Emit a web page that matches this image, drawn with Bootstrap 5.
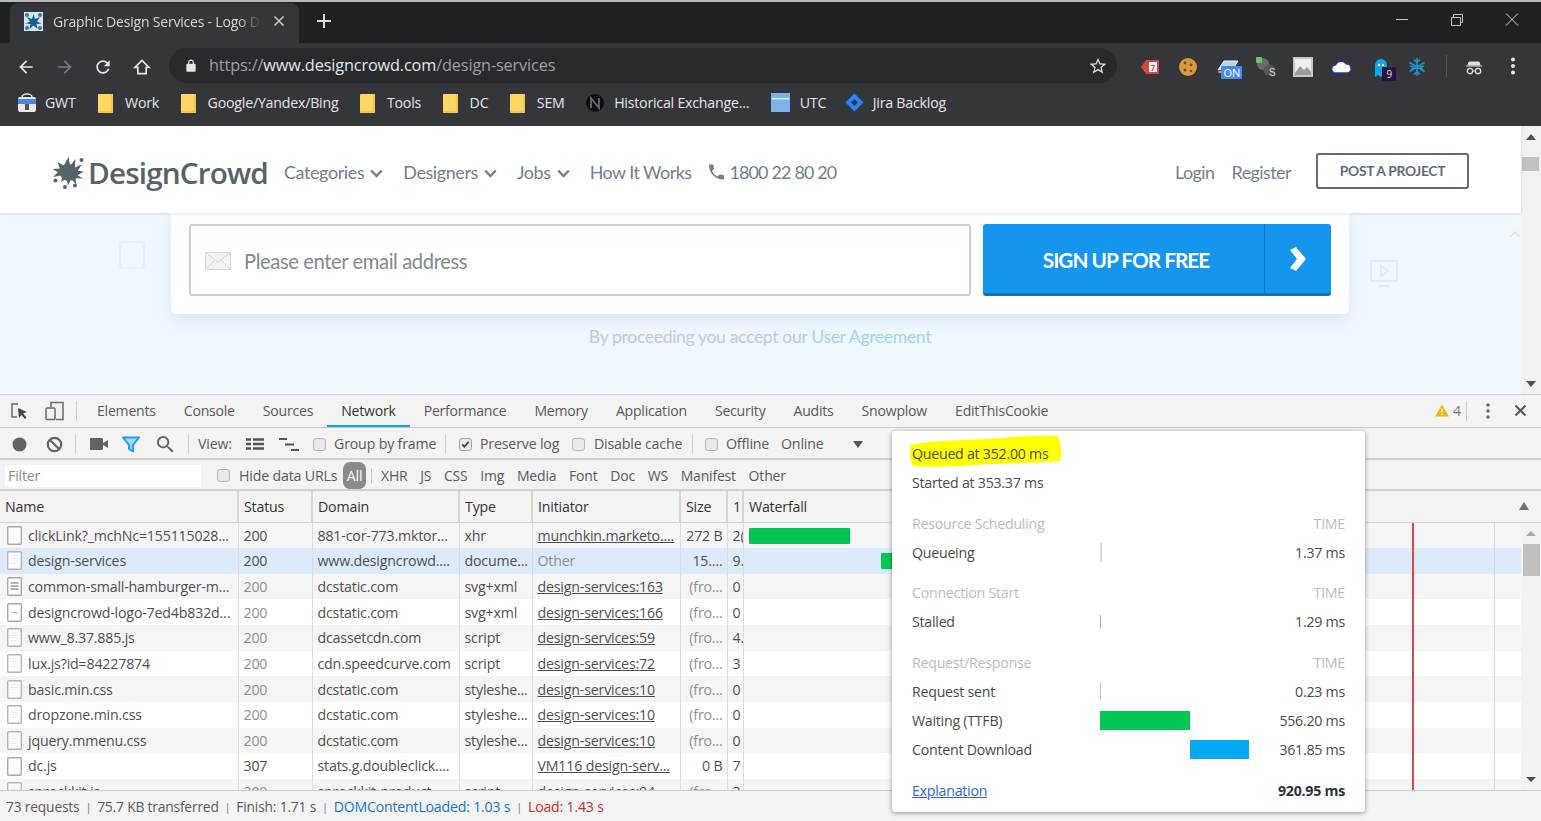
<!DOCTYPE html>
<html lang="en">
<head>
<meta charset="utf-8">
<title>Graphic Design Services - DevTools</title>
<link rel="stylesheet" href="https://cdn.jsdelivr.net/npm/bootstrap@5.3.0/dist/css/bootstrap.min.css">
<style>
html,body{height:821px;overflow:hidden;background:#fff}
body{font-family:"Open Sans","Liberation Sans",sans-serif}
.shell{width:1541px;height:821px;position:relative;overflow:hidden}
.svg-defs{position:absolute;width:0;height:0}
.fx0{flex:none}
/* chrome */
.topline{height:2px;background:#b9b9b9}
.tabstrip{height:41px;background:#202124}
.chrome-tab{width:289px;height:40px;margin:1px 0 0 10px;background:#35363a;border-radius:8px 8px 0 0;color:#d5d6d8;font-size:14px;letter-spacing:-.2px;padding:0 14px 4px 14px}
.fav{margin-right:10px;flex:none}
.tab-title{width:209px;overflow:hidden;white-space:nowrap;-webkit-mask-image:linear-gradient(90deg,#000 88%,transparent);mask-image:linear-gradient(90deg,#000 88%,transparent)}
.new-tab{margin:11px 0 0 17px}
.win-group{margin-right:1.5px}
.win-btn{width:55px}
.toolbar-dark{height:83px;background:#35363a;color:#e4e5e7}
.addr-row{height:45px;padding:0 0 0 16px}
.tool-btn{width:20px;margin-right:19px;flex:none}
.tool-btn.tight{margin-right:18px}
.addr{width:948px;height:35px;margin-left:-2px;background:#292a2d;border-radius:18px;padding:0 9px 0 15px;font-size:16.3px;letter-spacing:-.15px}
.addr .dim{color:#9aa0a6}
.addr-text{margin-left:3px}
.ext-set{margin-left:23px}
.ext-box{width:38.2px;flex:none;position:relative}
.ext-box.w-cloud{width:43.5px}
.ext-box.w-ghost{width:34px}
.ext-box.w-snow{width:18px}
.ext-sep{width:1px;height:22px;background:#55575b;margin:0 18px 0 20px}
.incog{width:46px}
.badge-on{position:absolute;left:5px;top:12px;background:#4688f1;color:#fff;font-size:11px;line-height:13px;padding:0 2px;border-radius:1px;letter-spacing:0}
.badge-nine{position:absolute;left:8px;top:14px;background:#2c0f3c;color:#ddd;font-size:10px;line-height:14px;width:14px;text-align:center;border-radius:1px}
.bm-row{height:38px;padding:0 0 8px 17px;font-size:14.2px;letter-spacing:-.22px;white-space:nowrap;gap:21.5px}
.bm-row>div{gap:12px}
.bm-row>div.g8{gap:8px;margin-right:1px}
.bm-row>div.g10{gap:10px}
.bm-row>div.bm-last{gap:9px;margin-left:-3px}
.folder{width:15px;height:19px;background:#fdd663;border-radius:1px;flex:none;margin-top:1px;box-shadow:inset -2px -2px 0 #f2c64d}
/* page */
.page-pane{height:268px;position:relative}
.page-main{width:1521px}
.site-nav{height:87px;background:#fff;padding:6px 52px 0;position:relative;z-index:2;box-shadow:0 1px 3px rgba(60,80,100,.16);font-family:Lato,sans-serif;font-size:17.9px;color:#708090}
.brand-word{font-family:"Open Sans",sans-serif;font-weight:600;font-size:29.7px;letter-spacing:-.85px;color:#566367;margin-left:3px;line-height:1}
.site-links{margin-left:16px}
.chev{margin:2px 0 0 6px}
.site-link{margin-right:20px;white-space:nowrap;letter-spacing:-.02em}
.site-link.how{margin-right:18px;letter-spacing:-.03em}
.phone-num{gap:5px;letter-spacing:-.045em}
.login-link{margin-right:17px;letter-spacing:-.03em}
.register-link{margin-right:25px;letter-spacing:-.03em}
.post-btn{width:153px;height:36px;border:2px solid #5d6b7b;border-radius:3px;font-size:13.8px;font-weight:700;color:#5d6b7b;letter-spacing:-.3px;background:#fff;margin-top:-3px}
.hero-pane{height:180px;background:#eef7fe;position:relative;font-family:Lato,sans-serif;padding-right:1px}
.form-card{width:1178px;height:101px;background:#fff;border-radius:0 0 5px 5px;box-shadow:0 6px 16px rgba(90,120,150,.13);padding:11px 18px 18px}
.email-box{width:782px;height:72px;border:2px solid #c8d0df;border-radius:3px;padding:2px 0 0 14px;color:#7f8a94;font-size:20.2px;letter-spacing:-.02em;background:#fff}
.env{margin-right:13px;flex:none}
.signup{width:348px;height:72px;margin-left:12px;background:#1496ec;border-bottom:3px solid #0c74bc;border-radius:3px;color:#fff;font-weight:700;font-size:20.8px;letter-spacing:-1px}
.signup-label{width:281px;padding:2px 0 0 5px}
.signup-arrow{width:67px;height:100%;border-left:1px solid #0f78c0}
.agree{margin-top:12px;color:#c3ccd4;font-size:17.6px;letter-spacing:-.02em;line-height:22px;text-align:center}
.agree span{color:#a1d4f5}
.ghost-icon{position:absolute}
.ghost-a{left:119px;top:28px}
.ghost-b{left:1370px;top:47px}
.ghost-c{left:1509px;top:17px}
.page-scroll{width:20px;background:#f1f1f1;position:relative}
.sb-thumb{position:absolute;left:1px;top:31px;width:17px;height:14px;background:#c1c1c1}
.sb-up,.sb-down{position:absolute;left:5px;width:0;height:0;border-left:5px solid transparent;border-right:5px solid transparent}
.sb-up{top:8px;border-bottom:6px solid #505050}
.sb-down{bottom:7px;border-top:6px solid #505050}
/* devtools */
.devtools{height:427px;background:#f3f3f3;color:#5a5a5a;font-size:14.2px;letter-spacing:-.18px;border-top:1px solid #ccc;white-space:nowrap}
.dt-tabs{height:33px;border-bottom:1px solid #ccc;padding-left:10px}
.dt-tab{padding:0 14px;height:32px;line-height:32px;color:#5a5a5a;font-size:14.05px;letter-spacing:-.21px}
.dt-tab.on{color:#333;box-shadow:inset 0 -2px 0 #03a9f4}
.dt-vsep{width:1px;height:20px;background:#ccc;flex:none}
.vs-tabs{margin:0 6px 0 12px}
.vs-warn{margin:0 19px 0 5px}
.vs-a{margin:0 14px 0 12px}
.vs-b{margin:0 9px 0 14px}
.vs-c{margin:0 13px 0 11px}
.vs-d{margin:0 12px}
.vs-e{margin:0 9px 0 5px;height:16px}
.warn-count{margin-left:4px;color:#777}
.dots-dt{margin-right:24px}
.close-dt{margin-right:14px}
.dt-bar{height:32px;border-bottom:2px solid #d2d2d2;position:relative;padding-top:2px}
.bar-main{padding-left:12px}
.dt-bar .form-check-input{width:13px;height:13px;margin:0;border:1px solid #b5b5b5;border-radius:3px;background-color:#e9e9e9;flex:none}
.dt-bar .form-check-input:checked{background-color:#e9e9e9;border-color:#a5a5a5;background-image:url("data:image/svg+xml,%3csvg xmlns='http://www.w3.org/2000/svg' viewBox='0 0 20 20'%3e%3cpath fill='none' stroke='%23444' stroke-width='3.4' d='m4 10 4 4 8-9'/%3e%3c/svg%3e")}
.dt-bar .ml-19{margin-left:19px}.dt-bar .ml-14{margin-left:14px}.dt-bar .ml-17{margin-left:17px}.dt-bar .ml-15{margin-left:15px}.dt-bar .ml-16{margin-left:16px}.dt-bar .ml-31{margin-left:31px}
.tx-view{width:48px}
.tx-group{margin-left:8px;width:100px}
.tx-pres{margin-left:8px;width:78px}
.tx-dis{margin-left:9px;width:86px}
.tx-off{margin-left:8px;width:43px}
.tx-on{margin-left:12px;width:41px}
.tx-hide{margin-left:9px;width:96px}
.filter-bar{height:31px}
.filter-input{width:196px;height:22px;background:#fff;color:#8b8b8b;padding-left:3px;line-height:22px;margin-left:5px}
.pill-all{width:23px;height:27px;margin-left:8px;background:#8a8a8a;color:#fff;border-radius:7px;line-height:27px;text-align:center}
.type-f{gap:12.7px;font-size:14px}
.net-grid{table-layout:fixed;border-collapse:collapse}
.net-grid td,.net-grid th{padding:0 0 0 5px;overflow:hidden;white-space:nowrap;font-weight:400;border-right:1px solid #dcdcdc}
.net-grid td:last-child,.net-grid th:last-child{border-right:0;overflow:visible}
.cw1{width:238px}.cw2{width:74px}.cw3{width:147px}.cw4{width:73px}.cw5{width:148px}.cw6{width:47px}.cw7{width:16px}
.head-grid{border-bottom:1px solid #d2d2d2;width:1541px}
.head-grid th{height:31px;border-right:2px solid #d6d6d6;color:#333}
.head-grid th:last-child{position:relative}
.sort-up{position:absolute;right:12px;top:11px;width:0;height:0;border-left:5px solid transparent;border-right:5px solid transparent;border-bottom:8px solid #6e6e6e}
.body-wrap{height:267px;overflow:hidden;position:relative;display:flex}
.body-grid{width:1521px;flex:none}
.body-grid tr{height:25.65px;background:#fff;color:#4f4f4f}
.body-grid tr:nth-child(odd){background:#f5f5f5}
.body-grid tr.picked{background:#dcebfc}
.body-grid td.dimc{color:#8e8e8e}
.body-grid a{color:#4f4f4f;text-decoration:underline}
.name-cell{display:flex;align-items:center;gap:6px;height:25.6px;margin-left:2px}
.bar-green{height:16px;background:#03c653;border-radius:1px;margin-top:1px}
.mark-red,.mark-gray{position:absolute;top:0;bottom:0;width:1px}
.mark-red{left:1412px;background:#d64a4a;width:2px}
.mark-gray{left:1494px;background:#d8d8d8}
.grid-scroll{width:20px;background:#f2f2f2;position:relative;flex:none}
.gs-thumb{position:absolute;left:2px;top:21px;width:17px;height:32px;background:#bfbfbf}
.gs-up,.gs-down{position:absolute;left:5px;width:0;height:0;border-left:5px solid transparent;border-right:5px solid transparent}
.gs-up{top:8px;border-bottom:5px solid #a9a9a9}
.gs-down{bottom:8px;border-top:5px solid #505050}
.status-line{height:30px;border-top:1px solid #ccc;padding:4px 0 0 6px;font-size:13.8px;color:#5a5a5a;gap:5.9px;background:#f3f3f3}
.status-line i{font-style:normal;font-size:11px;color:#777}
.c-blue{color:#1a73c8;font-size:14.1px}
.c-red{color:#c62f2f;font-size:14.1px}
/* timing popup */
.timing{position:absolute;left:892px;top:431px;width:473px;height:381px;background:#fff;border-radius:3px;box-shadow:0 1px 5px rgba(0,0,0,.4);padding:8px 20px 0;font-size:14.2px;letter-spacing:-.25px;color:#4a4a4a;z-index:5}
.t-row{height:29px;display:flex;align-items:center;position:relative}
.t-head{color:#bcbcbc;margin-top:12px}
.t-head.t-second{margin-top:11px}
.t-label{width:188px;flex:none}
.t-track{width:150px;height:19px;flex:none;position:relative}
.t-val{flex:1;text-align:right}
.t-fill{position:absolute;top:0;bottom:0}
.tick{position:absolute;top:0;bottom:0;left:0;width:2px;background:#d8d8d8}
.tick.t-stall{width:1px;background:#aaa;top:3px;bottom:3px}
.tick.t-sent{width:1px;background:#c4c4c4}
.fill-wait{left:0;width:90px;background:#03c653}
.fill-dl{left:90px;width:59px;background:#03a9f4}
.highlight{position:absolute;left:-4px;top:-6px;z-index:-1}
.t-foot{margin-top:12px}
.t-foot a{color:#3367c7}
.t-foot b{font-weight:700;color:#333}
</style>
</head>
<body>
<svg class="svg-defs" width="0" height="0">
<defs>
<symbol id="doc" viewBox="0 0 15 19"><rect x=".7" y=".7" width="13.6" height="17.6" rx="1" fill="#fff" stroke="#b4b4b4" stroke-width="1.4"/><path d="M3.5 5h8M3.5 7.5h8M3.5 10h8M3.5 12.5h6" stroke="#ececec"/></symbol>
<symbol id="blank" viewBox="0 0 15 19"><rect x=".7" y=".7" width="13.6" height="17.6" rx="1" fill="#fff" stroke="#a8a8a8" stroke-width="1.4"/></symbol>
<symbol id="lined" viewBox="0 0 15 19"><rect x=".7" y=".7" width="13.6" height="17.6" rx="1" fill="#fff" stroke="#a8a8a8" stroke-width="1.4"/><path d="M3.5 6h8M3.5 9h8M3.5 12h8" stroke="#5a6f88" stroke-width="1.2"/></symbol>
<symbol id="dash" viewBox="0 0 15 19"><rect x=".7" y=".7" width="13.6" height="17.6" rx="1" fill="#fff" stroke="#a8a8a8" stroke-width="1.4"/><path d="M4 9.500h7" stroke="#bbb"/></symbol>
<symbol id="chevdown" viewBox="0 0 13 9"><path d="M1.200 1.500 6.500 7l5.300-5.500" fill="none" stroke="#708090" stroke-width="2.400"/></symbol>
</defs>
</svg>
<div class="shell">
  <div class="topline"></div>
  <div class="tabstrip d-flex align-items-start">
    <div class="chrome-tab d-flex align-items-center">
      <svg width="19" height="19" viewBox="0 0 19 19" class="fav"><rect width="19" height="19" fill="#fff"/><rect width="19" height="19" fill="#1f6fa8" opacity=".18"/><path d="M9.500 2 11 7l5-2-3 4.500 4.500 2-5 .5 1 5-4-3.500-4 3.500 1-5-5-.5 4.500-2L3 5l5 2z" fill="#12608f"/><circle cx="3" cy="3" r="2" fill="#1f7fb8"/><circle cx="16" cy="3" r="2" fill="#1f7fb8"/><circle cx="3" cy="16" r="2" fill="#1f7fb8"/><circle cx="16" cy="16" r="2" fill="#1f7fb8"/></svg>
      <div class="tab-title">Graphic Design Services - Logo Design</div>
      <svg width="12" height="12" viewBox="0 0 12 12" class="ms-auto"><path d="M1.500 1.500l9 9m0-9l-9 9" stroke="#c6c7c9" stroke-width="1.6"/></svg>
    </div>
    <svg width="16" height="16" viewBox="0 0 16 16" class="new-tab"><path d="M8 1v14M1 8h14" stroke="#dadbdd" stroke-width="2"/></svg>
    <div class="ms-auto d-flex win-group">
      <div class="win-btn text-center"><svg width="14" height="34" viewBox="0 0 14 34"><path d="M1 17.500h12" stroke="#c4c5c7"/></svg></div>
      <div class="win-btn text-center"><svg width="14" height="34" viewBox="0 0 14 34"><path d="M1.500 15.500h9v8h-9zM3.500 15.500v-3h9v8h-2" fill="none" stroke="#c4c5c7"/></svg></div>
      <div class="win-btn text-center"><svg width="14" height="34" viewBox="0 0 14 34"><path d="M1 11.500l12 12m0-12l-12 12" stroke="#d4d5d7"/></svg></div>
    </div>
  </div>
  <div class="toolbar-dark">
    <div class="addr-row d-flex align-items-center">
      <div class="tool-btn"><svg width="20" height="20" viewBox="0 0 24 24"><path fill="#e4e5e7" d="M20 11H7.830l5.590-5.590L12 4l-8 8 8 8 1.410-1.410L7.830 13H20v-2z"/></svg></div>
      <div class="tool-btn tight"><svg width="20" height="20" viewBox="0 0 24 24"><path fill="#777a7e" d="M4 11h12.170l-5.590-5.590L12 4l8 8-8 8-1.410-1.410L16.170 13H4v-2z"/></svg></div>
      <div class="tool-btn"><svg width="20" height="20" viewBox="0 0 24 24"><path fill="#e4e5e7" d="M17.650 6.350C16.200 4.900 14.210 4 12 4c-4.420 0-7.990 3.580-7.990 8s3.570 8 7.990 8c3.730 0 6.840-2.550 7.730-6h-2.080c-.82 2.330-3.040 4-5.650 4-3.310 0-6-2.690-6-6s2.690-6 6-6c1.660 0 3.140.69 4.220 1.780L13 11h7V4l-2.350 2.350z"/></svg></div>
      <div class="tool-btn"><svg width="20" height="20" viewBox="0 0 24 24"><path fill="none" stroke="#e4e5e7" stroke-width="2" d="M12 4 3.500 12.500H7V20h10v-7.500h3.500z"/></svg></div>
      <div class="addr d-flex align-items-center">
        <svg width="14" height="14" viewBox="0 0 24 24" class="me-2"><path fill="#e4e5e7" d="M18 8h-1V6c0-2.760-2.240-5-5-5S7 3.240 7 6v2H6c-1.100 0-2 .9-2 2v10c0 1.100.9 2 2 2h12c1.100 0 2-.9 2-2V10c0-1.100-.9-2-2-2zM9 6c0-1.660 1.340-3 3-3s3 1.340 3 3v2H9V6z"/></svg>
        <span class="addr-text"><span class="dim">https://</span>www.designcrowd.com<span class="dim">/design-services</span></span>
        <svg width="20" height="20" viewBox="0 0 24 24" class="ms-auto"><path fill="#dcdde0" d="M22 9.240l-7.190-.62L12 2 9.190 8.630 2 9.240l5.460 4.730L5.820 21 12 17.270 18.180 21l-1.630-7.030L22 9.240zM12 15.400l-3.760 2.270 1-4.280-3.320-2.880 4.380-.38L12 6.100l1.710 4.040 4.380.38-3.320 2.880 1 4.280L12 15.400z"/></svg>
      </div>
      <div class="d-flex align-items-center ext-set">
        <div class="ext-box"><svg width="20" height="18" viewBox="0 0 20 18"><path d="M6 2h13v14H6L1 9z" fill="#d6453d"/><rect x="9" y="4" width="8" height="10" fill="#fff"/><text x="10.500" y="12.500" font-size="9" font-weight="700" fill="#d6453d" font-family="Liberation Sans">7</text></svg></div>
        <div class="ext-box"><svg width="20" height="20" viewBox="0 0 20 20"><circle cx="10" cy="10" r="9" fill="#d79a3f"/><circle cx="7" cy="6" r="1.400" fill="#7a4a16"/><circle cx="13" cy="8" r="1.400" fill="#7a4a16"/><circle cx="7" cy="13" r="1.400" fill="#7a4a16"/><circle cx="13" cy="14" r="1.200" fill="#7a4a16"/></svg></div>
        <div class="ext-box"><svg width="24" height="18" viewBox="0 0 24 18"><path d="M2 12 8 3h14l-5 8H6z" fill="#b9d3ea" stroke="#f5f5f5"/><path d="M1 14l6-2v4z" fill="#e2b04a"/></svg><span class="badge-on">ON</span></div>
        <div class="ext-box"><svg width="22" height="22" viewBox="0 0 22 22"><circle cx="8" cy="8" r="6" fill="#6a6d70"/><circle cx="14" cy="14" r="5.500" fill="#55585b"/><rect x="1" y="1" width="6" height="6" rx="1" fill="#68c36a"/><text x="14" y="20" font-size="10" fill="#d5d5d5" font-family="Liberation Sans">S</text></svg></div>
        <div class="ext-box"><svg width="20" height="20" viewBox="0 0 20 20"><rect width="20" height="20" fill="#c8c8c8"/><rect x="2" y="2" width="16" height="16" fill="#efefef"/><path d="M2 16l5-7 4 4 3-3 4 5v3H2z" fill="#9b9b9b"/></svg></div>
        <div class="ext-box w-cloud"><svg width="21" height="14" viewBox="0 0 21 14"><path d="M5 13a4 4 0 0 1-.5-8A6 6 0 0 1 15 4a4.500 4.500 0 0 1 1 9z" fill="#fff" stroke="#2a35b5" stroke-width="1.300"/></svg></div>
        <div class="ext-box w-ghost"><svg width="14" height="21" viewBox="0 0 14 21"><path d="M1 8a6 6 0 0 1 12 0v12l-3-2-3 2-3-2-3 2z" fill="#12a5ea"/><circle cx="5" cy="8" r="1.200" fill="#fff"/><circle cx="9" cy="8" r="1.200" fill="#fff"/></svg><span class="badge-nine">9</span></div>
        <div class="ext-box w-snow"><svg width="18" height="20" viewBox="0 0 18 20"><path d="M9 1v18M1.500 5.500l15 9m0-9l-15 9M6 2.500l3 3 3-3M6 17.500l3-3 3 3M2 9l3.500 1L3 13M16 9l-3.500 1L15 13" fill="none" stroke="#1e95c9" stroke-width="1.500"/></svg></div>
        <div class="ext-sep"></div>
        <div class="incog"><svg width="18" height="18" viewBox="0 0 18 18"><path d="M4 4h10l1 3H3zM1 8h16" fill="#dcdde0" stroke="#dcdde0"/><circle cx="5" cy="13" r="2.700" fill="none" stroke="#dcdde0" stroke-width="1.300"/><circle cx="13" cy="13" r="2.700" fill="none" stroke="#dcdde0" stroke-width="1.300"/><path d="M7.700 13h2.600" stroke="#dcdde0"/></svg></div>
        <svg width="4" height="18" viewBox="0 0 4 18"><circle cx="2" cy="2.500" r="2" fill="#e4e5e7"/><circle cx="2" cy="9" r="2" fill="#e4e5e7"/><circle cx="2" cy="15.500" r="2" fill="#e4e5e7"/></svg>
      </div>
    </div>
    <div class="bm-row d-flex align-items-center">
      <div class="d-flex align-items-center g8"><svg width="20" height="20" viewBox="0 0 20 20"><rect x="1" y="4" width="18" height="15" rx="2" fill="#e9e9e9"/><path d="M5 4a5 3 0 0 1 10 0" fill="none" stroke="#e9e9e9" stroke-width="1.500"/><rect x="1" y="6" width="18" height="5" fill="#4a86e8"/><rect x="8" y="11" width="4" height="6" fill="#555"/></svg>GWT</div>
      <div class="d-flex align-items-center"><div class="folder"></div>Work</div>
      <div class="d-flex align-items-center"><div class="folder"></div>Google/Yandex/Bing</div>
      <div class="d-flex align-items-center"><div class="folder"></div>Tools</div>
      <div class="d-flex align-items-center"><div class="folder"></div>DC</div>
      <div class="d-flex align-items-center"><div class="folder"></div>SEM</div>
      <div class="d-flex align-items-center g10"><svg width="18" height="18" viewBox="0 0 18 18"><circle cx="9" cy="9" r="9" fill="#0d0d0d"/><path d="M5 14V4l8 10V4" fill="none" stroke="#6b6b6b" stroke-width="1.800"/></svg>Historical Exchange...</div>
      <div class="d-flex align-items-center g10"><svg width="19" height="19" viewBox="0 0 19 19"><rect width="19" height="19" fill="#7eb2ea"/><rect x="1" y="5" width="17" height="1.500" fill="#dceaf9"/></svg>UTC</div>
      <div class="d-flex align-items-center bm-last"><svg width="19" height="19" viewBox="0 0 19 19"><path d="M9.500.5l9 9-9 9-9-9z" fill="#2684ff"/><path d="M9.500 6l3.500 3.500L9.500 13 6 9.500z" fill="#35363a"/></svg>Jira Backlog</div>
    </div>
  </div>

  <div class="page-pane d-flex">
    <div class="page-main">
      <nav class="site-nav d-flex align-items-center">
        <svg width="33" height="34" viewBox="0 0 33 34" class="fx0"><path d="M16.500 1l1.700 9 5.300-7-.6 8.600 7.100-3.300-4.300 6.500 6.300.7-6.400 3.800 5.500 3.100-7.500-.2.600 6-5.100-5.200-3.200 6.500-1.600-7-5.100 3.500 1.300-6.800L1 21l4.800-4.700L.5 13l7.400-.6L5.500 6l6.300 3.500z" fill="#566367"/><circle cx="16.500" cy="16.500" r="8.500" fill="#566367"/><circle cx="3.500" cy="24.500" r="2" fill="#566367"/><circle cx="13" cy="31" r="2" fill="#566367"/><circle cx="23" cy="29.500" r="2" fill="#566367"/><circle cx="29.500" cy="4" r="2" fill="#566367"/></svg>
        <span class="brand-word">DesignCrowd</span>
        <div class="d-flex align-items-center site-links">
          <span class="site-link d-flex align-items-center">Categories<svg class="chev" width="13" height="9"><use href="#chevdown"/></svg></span>
          <span class="site-link d-flex align-items-center">Designers<svg class="chev" width="13" height="9"><use href="#chevdown"/></svg></span>
          <span class="site-link d-flex align-items-center">Jobs<svg class="chev" width="13" height="9"><use href="#chevdown"/></svg></span>
          <span class="site-link how">How It Works</span>
          <span class="d-flex align-items-center phone-num"><svg width="15" height="16" viewBox="3 3 18 18"><path fill="#708090" d="M6.620 10.790c1.440 2.830 3.760 5.140 6.590 6.590l2.200-2.200c.27-.27.67-.36 1.020-.24 1.120.37 2.330.57 3.570.57.55 0 1 .45 1 1V20c0 .55-.45 1-1 1-9.390 0-17-7.610-17-17 0-.55.45-1 1-1h3.500c.55 0 1 .45 1 1 0 1.250.2 2.450.57 3.570.11.35.03.74-.25 1.020l-2.200 2.200z"/></svg>1800 22 80 20</span>
        </div>
        <div class="ms-auto d-flex align-items-center">
          <span class="login-link">Login</span>
          <span class="register-link">Register</span>
          <div class="post-btn d-flex align-items-center justify-content-center">POST A PROJECT</div>
        </div>
      </nav>
      <div class="hero-pane">
        <svg class="ghost-icon ghost-a" width="26" height="28" viewBox="0 0 26 28"><rect x="1" y="1" width="24" height="26" rx="3" fill="none" stroke="#e6eff6" stroke-width="2"/></svg>
        <svg class="ghost-icon ghost-b" width="28" height="28" viewBox="0 0 28 28"><rect x="1" y="1" width="26" height="20" fill="none" stroke="#dfeaf3" stroke-width="2"/><path d="M11 6l7 5-7 5z" fill="none" stroke="#dfeaf3" stroke-width="2"/><path d="M8 26h12" stroke="#dfeaf3" stroke-width="2"/></svg>
        <svg class="ghost-icon ghost-c" width="12" height="8" viewBox="0 0 12 8"><path d="M1 7l5-5 5 5" fill="none" stroke="#f6d5d5" stroke-width="1.500"/></svg>
        <div class="form-card mx-auto d-flex">
          <div class="email-box d-flex align-items-center">
            <svg width="26" height="18" viewBox="0 0 26 18" class="env"><rect x=".5" y=".5" width="25" height="17" fill="#f1f2f3" stroke="#d3d6d9"/><path d="M1 1l12 9 12-9M1 17l9-9M25 17l-9-9" fill="none" stroke="#d3d6d9"/></svg>
            Please enter email address
          </div>
          <div class="signup d-flex align-items-center">
            <div class="signup-label text-center">SIGN UP FOR FREE</div>
            <div class="signup-arrow d-flex align-items-center justify-content-center"><svg width="18" height="24" viewBox="0 0 18 24"><path d="M1 3l6-3 10 12-10 12-6-3 7-9z" fill="#fff"/></svg></div>
          </div>
        </div>
        <div class="agree">By proceeding you accept our <span>User Agreement</span></div>
      </div>
    </div>
    <div class="page-scroll"><div class="sb-up"></div><div class="sb-thumb"></div><div class="sb-down"></div></div>
  </div>

  <div class="devtools d-flex flex-column">
    <div class="dt-tabs d-flex align-items-center fx0">
      <svg width="19" height="19" viewBox="0 0 19 19" class="me-2"><path d="M8 2H2v13h5" fill="none" stroke="#6a6a6a" stroke-width="1.500"/><path d="M8 6l9 4-4 1.500 3.500 4-1.500 1.500-3.500-4L9 16z" fill="#444"/></svg>
      <svg width="19" height="20" viewBox="0 0 19 20" class="ms-2"><path d="M6 6V1.500h12v17H11" fill="none" stroke="#6a6a6a" stroke-width="1.500"/><rect x="1" y="7" width="9" height="11.500" rx="1" fill="none" stroke="#6a6a6a" stroke-width="1.500"/></svg>
      <div class="dt-vsep vs-tabs"></div>
      <div class="nav flex-nowrap">
        <div class="dt-tab">Elements</div><div class="dt-tab">Console</div><div class="dt-tab">Sources</div><div class="dt-tab on">Network</div><div class="dt-tab">Performance</div><div class="dt-tab">Memory</div><div class="dt-tab">Application</div><div class="dt-tab">Security</div><div class="dt-tab">Audits</div><div class="dt-tab">Snowplow</div><div class="dt-tab">EditThisCookie</div>
      </div>
      <div class="ms-auto d-flex align-items-center">
        <svg width="14" height="13" viewBox="0 0 14 13"><path d="M7 .5 13.800 12.500H.2z" fill="#f4b400"/><path d="M7 4.500v4M7 9.500v1.500" stroke="#fff" stroke-width="1.500"/></svg>
        <span class="warn-count">4</span>
        <div class="dt-vsep vs-warn"></div>
        <svg width="4" height="16" viewBox="0 0 4 16" class="dots-dt"><circle cx="2" cy="2" r="1.700" fill="#666"/><circle cx="2" cy="8" r="1.700" fill="#666"/><circle cx="2" cy="14" r="1.700" fill="#666"/></svg>
        <svg width="13" height="13" viewBox="0 0 13 13" class="close-dt"><path d="M1.500 1.500l10 10m0-10l-10 10" stroke="#555" stroke-width="2"/></svg>
      </div>
    </div>
    <div class="dt-bar bar-main d-flex align-items-center fx0">
      <svg width="15" height="15" viewBox="0 0 15 15"><circle cx="7.500" cy="7.500" r="7" fill="#636363"/></svg>
      <svg width="17" height="17" viewBox="0 0 17 17" class="ml-19"><circle cx="8.500" cy="8.500" r="6.700" fill="none" stroke="#636363" stroke-width="2.200"/><path d="M4 4l9 9" stroke="#636363" stroke-width="2.200"/></svg>
      <div class="dt-vsep vs-a"></div>
      <svg width="18" height="12" viewBox="0 0 18 12"><rect width="13" height="12" rx="1" fill="#636363"/><path d="M13 5l5-3v8l-5-3z" fill="#636363"/></svg>
      <svg width="18" height="17" viewBox="0 0 18 17" class="ml-14"><path d="M1 1.500h16L11 9v6.500L7 13V9z" fill="#a8d8f8" stroke="#1a9cf0" stroke-width="2" stroke-linejoin="round"/></svg>
      <svg width="17" height="17" viewBox="3 3 18 18" class="ml-17"><path fill="#636363" d="M15.500 14h-.79l-.28-.27A6.470 6.470 0 0 0 16 9.500 6.500 6.500 0 1 0 9.500 16c1.610 0 3.090-.59 4.230-1.570l.27.28v.79l5 4.990L20.490 19l-4.990-5zm-6 0C7.010 14 5 11.990 5 9.500S7.010 5 9.500 5 14 7.010 14 9.500 11.990 14 9.500 14z"/></svg>
      <div class="dt-vsep vs-b"></div>
      <span class="tx-view">View:</span>
      <svg width="18" height="12" viewBox="0 0 18 12"><path d="M0 1.500h5M7 1.500h11M0 6h5M7 6h11M0 10.500h5M7 10.500h11" stroke="#555" stroke-width="2.500"/></svg>
      <svg width="20" height="13" viewBox="0 0 20 13" class="ml-15"><path d="M0 1h8M6 6.500h9M12 12h8" stroke="#555" stroke-width="2"/></svg>
      <input class="form-check-input ml-14" type="checkbox" aria-label="Group by frame">
      <span class="tx-group">Group by frame</span>
      <div class="dt-vsep vs-c"></div>
      <input class="form-check-input" type="checkbox" checked aria-label="Preserve log">
      <span class="tx-pres">Preserve log</span>
      <input class="form-check-input ml-14" type="checkbox" aria-label="Disable cache">
      <span class="tx-dis">Disable cache</span>
      <div class="dt-vsep vs-d"></div>
      <input class="form-check-input" type="checkbox" aria-label="Offline">
      <span class="tx-off">Offline</span>
      <span class="tx-on">Online</span>
      <svg width="10" height="7" viewBox="0 0 10 7" class="ml-31"><path d="M0 0h10L5 7z" fill="#555"/></svg>
    </div>
    <div class="dt-bar filter-bar d-flex align-items-center fx0">
      <div class="filter-input">Filter</div>
      <input class="form-check-input ml-16" type="checkbox" aria-label="Hide data URLs">
      <span class="tx-hide">Hide data URLs</span>
      <span class="pill-all">All</span>
      <div class="dt-vsep vs-e"></div>
      <div class="d-flex type-f"><span>XHR</span><span>JS</span><span>CSS</span><span>Img</span><span>Media</span><span>Font</span><span>Doc</span><span>WS</span><span>Manifest</span><span>Other</span></div>
    </div>
    <table class="net-grid head-grid fx0">
      <colgroup><col class="cw1"><col class="cw2"><col class="cw3"><col class="cw4"><col class="cw5"><col class="cw6"><col class="cw7"><col></colgroup>
      <tr><th>Name</th><th>Status</th><th>Domain</th><th>Type</th><th>Initiator</th><th>Size</th><th>1</th><th>Waterfall<span class="sort-up"></span></th></tr>
    </table>
    <div class="body-wrap">
      <table class="net-grid body-grid">
        <colgroup><col class="cw1"><col class="cw2"><col class="cw3"><col class="cw4"><col class="cw5"><col class="cw6"><col class="cw7"><col></colgroup>
        <tr><td><div class="name-cell"><svg width="15" height="19"><use href="#blank"/></svg>clickLink?_mchNc=155115028...</div></td><td>200</td><td>881-cor-773.mktor...</td><td>xhr</td><td><a href="#">munchkin.marketo....</a></td><td class="text-end pe-1">272 B</td><td>2(</td><td><div class="bar-green" style="width:101px"></div></td></tr>
        <tr class="picked"><td><div class="name-cell"><svg width="15" height="19"><use href="#doc"/></svg>design-services</div></td><td>200</td><td>www.designcrowd....</td><td>docume...</td><td class="dimc">Other</td><td class="text-end pe-1">15....</td><td>9.</td><td><div class="bar-green" style="width:20px;margin-left:132px"></div></td></tr>
        <tr><td><div class="name-cell"><svg width="15" height="19"><use href="#lined"/></svg>common-small-hamburger-m...</div></td><td class="dimc">200</td><td>dcstatic.com</td><td>svg+xml</td><td><a href="#">design-services:163</a></td><td class="text-end pe-1 dimc">(fro...</td><td>0</td><td></td></tr>
        <tr><td><div class="name-cell"><svg width="15" height="19"><use href="#dash"/></svg>designcrowd-logo-7ed4b832d...</div></td><td class="dimc">200</td><td>dcstatic.com</td><td>svg+xml</td><td><a href="#">design-services:166</a></td><td class="text-end pe-1 dimc">(fro...</td><td>0</td><td></td></tr>
        <tr><td><div class="name-cell"><svg width="15" height="19"><use href="#doc"/></svg>www_8.37.885.js</div></td><td class="dimc">200</td><td>dcassetcdn.com</td><td>script</td><td><a href="#">design-services:59</a></td><td class="text-end pe-1 dimc">(fro...</td><td>4.</td><td></td></tr>
        <tr><td><div class="name-cell"><svg width="15" height="19"><use href="#doc"/></svg>lux.js?id=84227874</div></td><td class="dimc">200</td><td>cdn.speedcurve.com</td><td>script</td><td><a href="#">design-services:72</a></td><td class="text-end pe-1 dimc">(fro...</td><td>3</td><td></td></tr>
        <tr><td><div class="name-cell"><svg width="15" height="19"><use href="#doc"/></svg>basic.min.css</div></td><td class="dimc">200</td><td>dcstatic.com</td><td>styleshe...</td><td><a href="#">design-services:10</a></td><td class="text-end pe-1 dimc">(fro...</td><td>0</td><td></td></tr>
        <tr><td><div class="name-cell"><svg width="15" height="19"><use href="#doc"/></svg>dropzone.min.css</div></td><td class="dimc">200</td><td>dcstatic.com</td><td>styleshe...</td><td><a href="#">design-services:10</a></td><td class="text-end pe-1 dimc">(fro...</td><td>0</td><td></td></tr>
        <tr><td><div class="name-cell"><svg width="15" height="19"><use href="#doc"/></svg>jquery.mmenu.css</div></td><td class="dimc">200</td><td>dcstatic.com</td><td>styleshe...</td><td><a href="#">design-services:10</a></td><td class="text-end pe-1 dimc">(fro...</td><td>0</td><td></td></tr>
        <tr><td><div class="name-cell"><svg width="15" height="19"><use href="#blank"/></svg>dc.js</div></td><td>307</td><td>stats.g.doubleclick....</td><td></td><td><a href="#">VM116 design-serv...</a></td><td class="text-end pe-1">0 B</td><td>7</td><td></td></tr>
        <tr><td><div class="name-cell"><svg width="15" height="19"><use href="#doc"/></svg>sprockkit.js</div></td><td class="dimc">200</td><td>sprockkit-product...</td><td>script</td><td><a href="#">design-services:94</a></td><td class="text-end pe-1 dimc">(fro...</td><td>3</td><td></td></tr>
      </table>
      <div class="mark-red"></div><div class="mark-gray"></div>
      <div class="grid-scroll"><div class="gs-up"></div><div class="gs-thumb"></div><div class="gs-down"></div></div>
    </div>
    <div class="status-line d-flex align-items-center fx0">
      <span>73 requests</span><i>|</i><span>75.7 KB transferred</span><i>|</i><span>Finish: 1.71 s</span><i>|</i><span class="c-blue">DOMContentLoaded: 1.03 s</span><i>|</i><span class="c-red">Load: 1.43 s</span>
    </div>
  </div>

  <div class="timing">
    <div class="t-row"><svg class="highlight" width="158" height="38" viewBox="0 0 158 38"><path d="M3 12C30 6 60 8 92 5c22-2 42-3 58-2 3 8 4 17 2 25-20 2-45 2-70 3-28 2-58 4-77 2C2 26 1 20 3 12z" fill="#ffff00"/></svg>Queued at 352.00 ms</div>
    <div class="t-row">Started at 353.37 ms</div>
    <div class="t-row t-head"><span class="t-label">Resource Scheduling</span><span class="t-track"></span><span class="t-val">TIME</span></div>
    <div class="t-row"><span class="t-label">Queueing</span><span class="t-track"><span class="tick"></span></span><span class="t-val">1.37 ms</span></div>
    <div class="t-row t-head t-second"><span class="t-label">Connection Start</span><span class="t-track"></span><span class="t-val">TIME</span></div>
    <div class="t-row"><span class="t-label">Stalled</span><span class="t-track"><span class="tick t-stall"></span></span><span class="t-val">1.29 ms</span></div>
    <div class="t-row t-head"><span class="t-label">Request/Response</span><span class="t-track"></span><span class="t-val">TIME</span></div>
    <div class="t-row"><span class="t-label">Request sent</span><span class="t-track"><span class="tick t-sent"></span></span><span class="t-val">0.23 ms</span></div>
    <div class="t-row"><span class="t-label">Waiting (TTFB)</span><span class="t-track"><span class="t-fill fill-wait"></span></span><span class="t-val">556.20 ms</span></div>
    <div class="t-row"><span class="t-label">Content Download</span><span class="t-track"><span class="t-fill fill-dl"></span></span><span class="t-val">361.85 ms</span></div>
    <div class="t-row t-foot"><a href="#">Explanation</a><b class="ms-auto">920.95 ms</b></div>
  </div>
</div>
</body>
</html>
